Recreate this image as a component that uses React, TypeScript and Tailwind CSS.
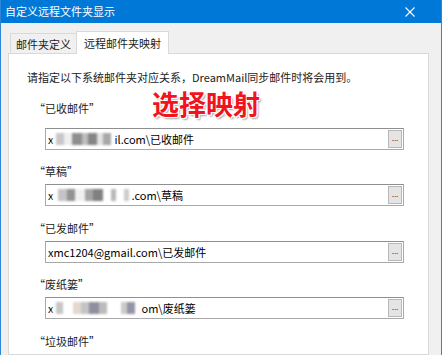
const font = { fontFamily: '"Noto Sans CJK SC", "Noto Sans", sans-serif' };

type Blot = { w: number; c: string };

function Blurred({ blots }: { blots: Blot[] }) {
  return (
    <span className="inline-flex items-center h-[14px] blur-[0.8px]">
      {blots.map((b, i) => (
        <span key={i} className="h-[12px]" style={{ width: b.w, background: b.c }} />
      ))}
    </span>
  );
}

function PathField({ pre, blots, post }: { pre?: string; blots?: Blot[]; post: string }) {
  return (
    <div className="ml-[18px] w-[359px] h-[22px] flex items-center border border-[#a9a9a9] border-t-[#8f8f8f] bg-white pl-[2px] pr-[1px]">
      <div className="flex-1 flex items-center text-[11px] text-black leading-none whitespace-nowrap">
        {pre && <span>{pre}</span>}
        {blots && <Blurred blots={blots} />}
        <span>{post}</span>
      </div>
      <div className="w-[14px] h-[18px] border border-[#b8b8b8] bg-[#e4e4e4] flex items-center justify-center text-[8px] text-[#333] leading-none pb-[3px]">
        ...
      </div>
    </div>
  );
}

function Label({ text }: { text: string }) {
  return <div className="ml-[7px] h-[16px] leading-[16px] text-[11px] text-[#222]">“{text}”</div>;
}

export default function App() {
  return (
    <div className="w-[442px] h-[355px] overflow-hidden flex flex-col bg-[#f0f0f0] border-x border-[#2d86d6]" style={font}>
      {/* title bar */}
      <div className="h-[23px] shrink-0 bg-[#0078d7] flex items-center justify-between pl-[4px] pr-[26px] text-white">
        <span className="text-[11px] leading-none">自定义远程文件夹显示</span>
        <svg width="10" height="10" viewBox="0 0 10 10" className="mt-[1px]">
          <path d="M0.5 0.5 L9.5 9.5 M9.5 0.5 L0.5 9.5" stroke="white" strokeWidth="1.1" />
        </svg>
      </div>

      {/* tabs */}
      <div className="flex items-end h-[30px] shrink-0 pl-[9px] pt-[8px]">
        <div className="h-[21px] px-[5px] flex items-center border border-b-0 border-[#d9d9d9] bg-[#f0f0f0] text-[11px] text-[#222] mb-[-1px]">
          邮件夹定义
        </div>
        <div className="relative z-10 h-[23px] px-[7px] flex items-center border border-b-0 border-[#d9d9d9] bg-white text-[11px] text-[#222] mb-[-1px] ml-[-1px]">
          远程邮件夹映射
        </div>
      </div>

      {/* panel */}
      <div className="relative ml-[7px] w-[421px] flex-1 bg-white border border-[#d9d9d9] pl-[18px] pt-[15px]">
        <div className="h-[16px] leading-[16px] text-[11px] text-[#222] whitespace-nowrap">
          请指定以下系统邮件夹对应关系，DreamMail同步邮件时将会用到。
        </div>

        <div className="mt-[15px]">
          <Label text="已收邮件" />
        </div>
        <div className="mt-[12px]">
          <PathField
            pre="x"
            blots={[
              { w: 3, c: "#fff" },
              { w: 8, c: "#c8c8c8" },
              { w: 8, c: "#eeeeee" },
              { w: 10, c: "#8e8e8e" },
              { w: 6, c: "#bdbdbd" },
              { w: 9, c: "#858585" },
              { w: 6, c: "#e2e2e2" },
              { w: 8, c: "#a8a8a8" },
              { w: 3, c: "#fff" },
            ]}
            post="il.com\已收邮件"
          />
        </div>

        <div className="mt-[13px]">
          <Label text="草稿" />
        </div>
        <div className="mt-[5px]">
          <PathField
            pre="x"
            blots={[
              { w: 5, c: "#fff" },
              { w: 9, c: "#c4c4c4" },
              { w: 8, c: "#929292" },
              { w: 10, c: "#f0f0f0" },
              { w: 8, c: "#a4a4a4" },
              { w: 10, c: "#808080" },
              { w: 8, c: "#fff" },
              { w: 5, c: "#b8b8b8" },
              { w: 8, c: "#fff" },
              { w: 5, c: "#cccccc" },
              { w: 2, c: "#fff" },
            ]}
            post=".com\草稿"
          />
        </div>

        <div className="mt-[14px]">
          <Label text="已发邮件" />
        </div>
        <div className="mt-[5px]">
          <PathField post="xmc1204@gmail.com\已发邮件" />
        </div>

        <div className="mt-[13px]">
          <Label text="废纸篓" />
        </div>
        <div className="mt-[5px]">
          <PathField
            pre="x"
            blots={[
              { w: 3, c: "#fff" },
              { w: 7, c: "#c6c6c6" },
              { w: 10, c: "#fff" },
              { w: 8, c: "#e4d8d0" },
              { w: 8, c: "#c4c4c4" },
              { w: 10, c: "#8f8fa0" },
              { w: 8, c: "#bcbcbc" },
              { w: 14, c: "#fff" },
              { w: 6, c: "#cacaca" },
              { w: 8, c: "#9494a6" },
              { w: 6, c: "#fff" },
            ]}
            post="om\废纸篓"
          />
        </div>

        <div className="mt-[14px]">
          <Label text="垃圾邮件" />
        </div>

        {/* annotation overlay */}
        <div
          className="absolute left-[143px] top-[36px] text-[27px] font-bold leading-none text-[#f0141e]"
          style={{ textShadow: "1px 1px 0 #fff, -1px -1px 0 #fff, 1px -1px 0 #fff, -1px 1px 0 #fff, 2px 2px 2px rgba(0,0,0,0.35)" }}
        >
          选择映射
        </div>
      </div>
    </div>
  );
}
